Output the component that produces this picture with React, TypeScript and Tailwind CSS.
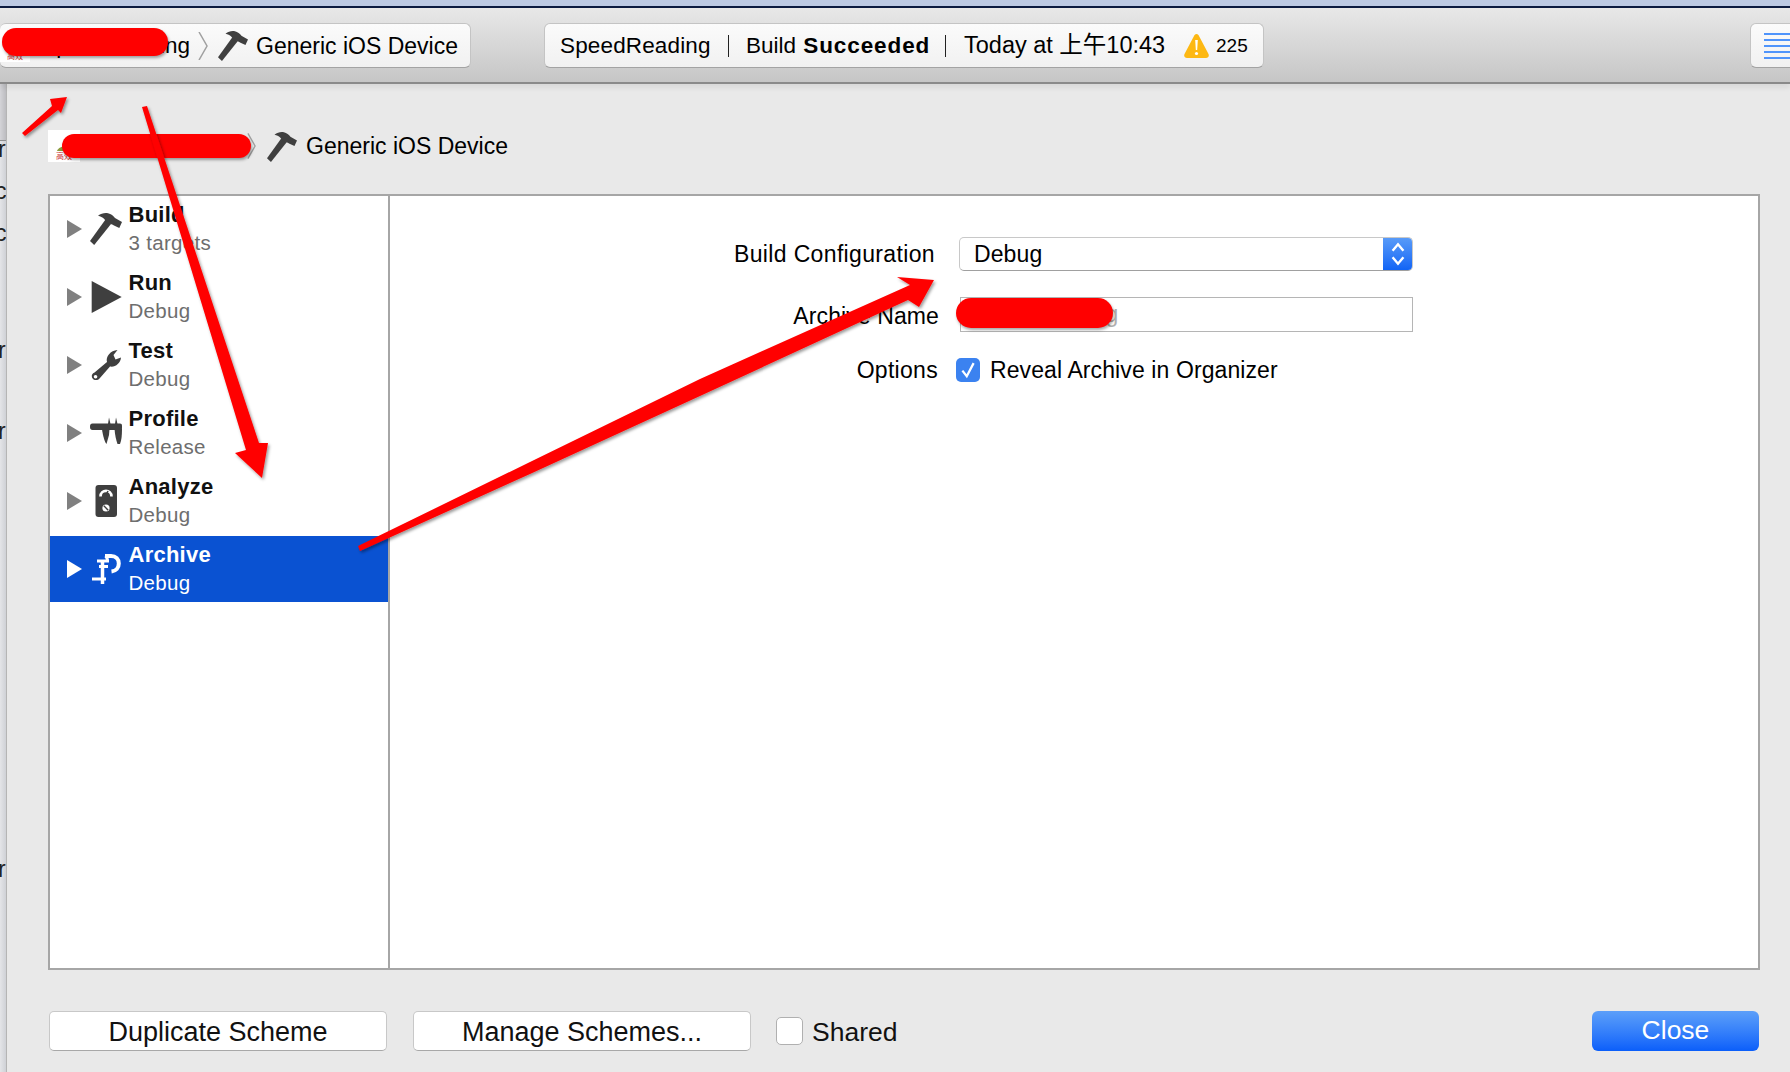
import type { ReactNode } from 'react';

const font = { fontFamily: '"Liberation Sans", "Noto Sans CJK SC", sans-serif' };

function HammerIcon({ className }: { className?: string }) {
  return (
    <svg viewBox="0 0 32 32" className={className} fill="currentColor">
      <path d="M0 28 L4.2 32 L21 11 L15.5 6.5 Z" />
      <path d="M8 2.8 C11 0.4 15 -0.4 18 0.3 C21 1 23.5 3 25 5 L32 9 L29.3 15 L24 12.5 C21.5 11 19.5 10.5 18 10.5 L14 5.8 C12.5 4.2 10.5 3.4 8 2.8 Z" />
    </svg>
  );
}

function PlayIcon({ className }: { className?: string }) {
  return (
    <svg viewBox="0 0 32 32" className={className} fill="currentColor">
      <path d="M1.7 0 L31.7 16 L1.7 32 Z" />
    </svg>
  );
}

function WrenchIcon({ className }: { className?: string }) {
  return (
    <svg viewBox="0 0 32 32" className={className} fill="currentColor">
      <path d="M17 13 C15.5 7.5 20.5 1.5 27.5 1 L23.5 6 L25.5 10.5 L31 8.5 C30.5 14.5 25 18.5 20 17.5 L9.5 29.5 C7.5 32 3 31.5 2 28.5 C1.2 26.2 2.4 24.4 4.5 23.5 Z M5.5 26 A1.8 1.8 0 1 0 5.6 29.6 A1.8 1.8 0 1 0 5.5 26 Z" fillRule="evenodd" />
    </svg>
  );
}

function CaliperIcon({ className }: { className?: string }) {
  return (
    <svg viewBox="0 0 32 32" className={className} fill="currentColor">
      <path d="M2.5 6.5 H30 C31.2 6.5 32 7.3 32 8.5 V11 C32 12.2 31.5 13 30.5 13 H2.5 C0.8 13 0 12 0 9.7 C0 7.5 0.8 6.5 2.5 6.5 Z" />
      <path d="M12 12 H19.5 L19 18 L16.5 27 C15 25.5 13 20 12 12 Z" />
      <path d="M24.5 12 H32 C32 18 31.5 23.5 30 27 L27.5 27 C26 23 25 18 24.5 12 Z" />
      <path d="M18 7 L19 0.5 L20.5 7 Z" />
      <path d="M25 7 L26 0.5 L27.5 7 Z" />
    </svg>
  );
}

function GaugeIcon({ className }: { className?: string }) {
  return (
    <svg viewBox="0 0 32 32" className={className}>
      <rect x="5.5" y="0" width="21.5" height="32" rx="3" fill="currentColor" />
      <path d="M10.5 11.5 C10.5 4 21.5 4 21.5 11.5" stroke="#fff" strokeWidth="2.6" fill="none" />
      <path d="M16 10 L18 6" stroke="currentColor" strokeWidth="1.5" />
      <circle cx="16" cy="23" r="3.6" fill="#fff" />
      <path d="M13.8 20.8 L18.2 25.2" stroke="currentColor" strokeWidth="1.4" />
    </svg>
  );
}

function ClampIcon({ className }: { className?: string }) {
  return (
    <svg viewBox="0 0 32 32" className={className} fill="none" stroke="currentColor">
      <path d="M15 3 H21 C26 3 28.8 6.5 28.8 10.5 C28.8 15 26 18 21.5 18.5" strokeWidth="4" />
      <path d="M15.5 3 C17 4.5 17.5 6 17.5 8" strokeWidth="3" />
      <path d="M7 8 H19" strokeWidth="3" />
      <path d="M9 13.5 H18" strokeWidth="3" />
      <path d="M12.5 8 V31" strokeWidth="3.5" />
      <path d="M2 26 H16" strokeWidth="3" />
    </svg>
  );
}

function Triangle({ selected }: { selected?: boolean }) {
  return (
    <svg viewBox="0 0 15 18" className={`h-[18px] w-[15px] shrink-0 ${selected ? 'text-white' : 'text-[#808080]'}`} fill="currentColor">
      <path d="M0 0 L15 9 L0 18 Z" />
    </svg>
  );
}

function Chevron({ className }: { className?: string }) {
  return (
    <svg viewBox="0 0 10 28" className={className} fill="none" stroke="#a0a0a0" strokeWidth="1.5">
      <path d="M1 0 L9 14 L1 28" />
    </svg>
  );
}

function AppLogo({ className }: { className: string }) {
  return (
    <div className={`flex flex-col items-center justify-end bg-white text-[8px] leading-[11px] text-[#c33] ${className}`}>
      <svg viewBox="0 0 16 6" className="h-[6px] w-[16px]">
        <path d="M1 6 C3 1 11 0 15 3 L15 6 Z" fill="#8a9a3c" />
      </svg>
      <span>高效</span>
    </div>
  );
}

const schemeRows = [
  { title: 'Build', sub: '3 targets', icon: HammerIcon },
  { title: 'Run', sub: 'Debug', icon: PlayIcon },
  { title: 'Test', sub: 'Debug', icon: WrenchIcon },
  { title: 'Profile', sub: 'Release', icon: CaliperIcon },
  { title: 'Analyze', sub: 'Debug', icon: GaugeIcon },
  { title: 'Archive', sub: 'Debug', icon: ClampIcon, selected: true },
];

const edgeLetters = [
  { ch: 'r', cls: '-mt-[2px] -ml-[2px]' },
  { ch: 'c', cls: 'mt-[22px] -ml-[5px]' },
  { ch: 'c', cls: 'mt-[22px] -ml-[5px]' },
  { ch: 'r', cls: 'mt-[97px] -ml-[2px]' },
  { ch: 'r', cls: 'mt-[61px] -ml-[2px]' },
  { ch: 'r', cls: 'mt-[418px] -ml-[2px]' },
];

function Pill({ className, children }: { className: string; children: ReactNode }) {
  return (
    <div className={`flex h-[45px] shrink-0 items-center rounded-[6px] border border-[#c4c4c4] border-b-[#a3a3a3] bg-gradient-to-b from-[#fbfbfb] to-[#f1f1f1] text-[22.5px] text-black ${className}`}>
      {children}
    </div>
  );
}

function FooterButton({ children, className }: { children: ReactNode; className: string }) {
  return (
    <button className={`h-[40px] w-[338px] shrink-0 rounded-[5px] border border-[#c8c8c8] border-b-[#a8a8a8] bg-white text-[27px] text-[#111] ${className}`}>
      {children}
    </button>
  );
}

export default function App() {
  return (
    <div style={font} className="relative h-[1072px] w-[1790px] overflow-hidden bg-[#e9e9e9]">
      <div className="h-[6px] bg-[#bcc9e3]" />
      <div className="h-[2px] bg-[#0b1a40]" />

      {/* toolbar */}
      <div className="relative z-10 flex h-[76px] border-b-2 border-[#8a8a8a] bg-gradient-to-b from-[#e8e8e8] to-[#c6c6c6] pt-[15px] shadow-[0_4px_5px_rgba(0,0,0,0.07)]">
        <Pill className="w-[471px] justify-end border-l-0 pr-[12px]">
          <span className="mr-[8px] pt-[1px]">SpeedReading</span>
          <Chevron className="mr-[10px] h-[28px] w-[10px]" />
          <HammerIcon className="mr-[8px] h-[30px] w-[30px] text-[#3f3f3f]" />
          <span className="pt-[2px] text-[23px]">Generic iOS Device</span>
        </Pill>
        <Pill className="ml-[73px] w-[720px] pl-[15px] pt-[1px]">
          <span className="w-[168px] tracking-[0.15px]">SpeedReading</span>
          <span className="h-[22px] w-px bg-[#222]" />
          <span className="ml-[17px] w-[199px]">
            Build <b className="ml-[1px] tracking-[0.9px]">Succeeded</b>
          </span>
          <span className="h-[22px] w-px bg-[#222]" />
          <span className="ml-[18px] w-[220px] text-[23.5px]">Today at 上午10:43</span>
          <svg viewBox="0 0 25 24" className="h-[24px] w-[25px]">
            <path d="M12.5 0 C14 0 14.5 1 15 2 L24.5 20 C25.5 22.5 24 24 22 24 H3 C1 24 -0.5 22.5 0.5 20 L10 2 C10.5 1 11 0 12.5 0 Z" fill="#fdb813" />
            <path d="M11.2 6 H13.8 L13.2 16 H11.8 Z" fill="#fff" />
            <circle cx="12.5" cy="19.5" r="1.6" fill="#fff" />
          </svg>
          <span className="ml-[7px] text-[19px]">225</span>
        </Pill>
        <Pill className="ml-[486px] w-[60px] flex-col justify-center gap-[4px] pl-[14px]">
          {[0, 1, 2, 3, 4].map(i => (
            <span key={i} className="h-[2px] w-[46px] bg-[#4f94fb]" />
          ))}
        </Pill>
      </div>

      <div className="flex h-[988px]">
        {/* window behind the sheet */}
        <div className="h-full w-[7px] shrink-0 overflow-hidden border-r border-[#b5b5b5] bg-gradient-to-r from-[#e4e5e8] to-[#cfd1d6] text-[23px] leading-[20px] text-[#222]">
          <div className="h-[57px] border-b border-[#8f8f8f] bg-gradient-to-r from-[#d4d4d8] to-[#bcbcc0]" />
          {edgeLetters.map((l, i) => (
            <div key={i} className={l.cls}>
              {l.ch}
            </div>
          ))}
        </div>

        <div className="min-w-0 flex-1 pl-[41px] pr-[30px]">
          <div className="flex h-[110px] items-start pt-[46px] text-black">
            <AppLogo className="h-[32px] w-[32px] shrink-0" />
            <div className="w-[167px]" />
            <Chevron className="mt-[2px] h-[28px] w-[9px]" />
            <HammerIcon className="ml-[11px] mt-[2px] h-[30px] w-[30px] text-[#3f3f3f]" />
            <span className="ml-[9px] mt-[2px] text-[23px] leading-[28px]">Generic iOS Device</span>
          </div>

          <div className="flex h-[776px] border-2 border-[#a6a6a6] bg-white">
            <div className="w-[340px] shrink-0 border-r-2 border-[#a6a6a6]">
              {schemeRows.map(row => {
                const Icon = row.icon;
                return (
                  <div
                    key={row.title}
                    className={`flex items-center pl-[17px] ${row.selected ? 'h-[66px] bg-[#0a52d2] pb-[1px]' : 'h-[68px] pb-[3px]'}`}
                  >
                    <Triangle selected={row.selected} />
                    <Icon className={`ml-[8px] h-[32px] w-[32px] shrink-0 ${row.selected ? 'text-white' : 'text-[#3f3f3f]'}`} />
                    <div className="ml-[6.5px] flex flex-col">
                      <span className={`text-[22px] font-bold leading-[28px] tracking-[0.25px] ${row.selected ? 'text-white' : 'text-[#111]'}`}>
                        {row.title}
                      </span>
                      <span className={`text-[20.5px] leading-[28px] tracking-[0.3px] ${row.selected ? 'text-white' : 'text-[#6e6e6e]'}`}>
                        {row.sub}
                      </span>
                    </div>
                  </div>
                );
              })}
            </div>

            <div className="flex flex-1 flex-col gap-[26px] pt-[41px] text-[23px] tracking-[0.1px] text-black">
              <div className="flex h-[34px] items-center">
                <span className="w-[545px] text-right tracking-[0.35px]">Build Configuration</span>
                <div className="ml-[24px] flex h-[34px] w-[454px] items-center justify-between overflow-hidden rounded-[5px] border border-[#c8c8c8] border-b-[#a0a0a0] bg-white pl-[14px]">
                  <span>Debug</span>
                  <div className="flex h-[34px] w-[29px] items-center justify-center bg-gradient-to-b from-[#5a9cf8] to-[#0d62f5]">
                    <svg viewBox="0 0 14 24" className="h-[26px] w-[16px]" fill="none" stroke="#fff" strokeWidth="2.2">
                      <path d="M2 9 L7 3 L12 9" />
                      <path d="M2 15 L7 21 L12 15" />
                    </svg>
                  </div>
                </div>
              </div>
              <div className="flex h-[35px] items-center">
                <span className="w-[549px] pt-[3px] text-right">Archive Name</span>
                <div className="ml-[21px] flex h-[35px] w-[453px] items-center border border-[#b5b5b5] bg-white pl-[4px] text-[#b0b0b0]">
                  SpeedReading
                </div>
              </div>
              <div className="flex h-[24px] items-center">
                <span className="w-[548px] text-right tracking-[0.3px]">Options</span>
                <div className="ml-[18px] flex h-[24px] w-[24px] items-center justify-center rounded-[5px] bg-[#3b82f0]">
                  <svg viewBox="0 0 16 16" className="h-[20px] w-[20px]" fill="none" stroke="#fff" strokeWidth="1.8">
                    <path d="M3.5 8.5 L7 13 L12.5 2.5" />
                  </svg>
                </div>
                <span className="ml-[10px]">Reveal Archive in Organizer</span>
              </div>
            </div>
          </div>

          <div className="flex pt-[41px]">
            <FooterButton className="ml-[1px]">Duplicate Scheme</FooterButton>
            <FooterButton className="ml-[26px]">Manage Schemes...</FooterButton>
            <span className="ml-[25px] mt-[6px] h-[28px] w-[27px] shrink-0 rounded-[5px] border border-[#b0b0b0] bg-white" />
            <span className="ml-[9px] mt-[5px] text-[26.5px] leading-[32px] text-[#111]">Shared</span>
            <button className="ml-auto mr-[1px] h-[40px] w-[167px] rounded-[6px] bg-gradient-to-b from-[#5c9ff9] to-[#0a5efa] text-[26.5px] text-white">
              Close
            </button>
          </div>
        </div>
      </div>

      {/* markup drawn over the screenshot: redactions and arrows */}
      <AppLogo className="absolute left-0 top-[30px] z-10 h-[32px] w-[30px]" />
      <div className="absolute left-[2px] top-[28px] z-20 h-[28px] w-[166px] rounded-[14px] bg-[#ff0000] shadow-[1px_2px_3px_rgba(0,0,0,0.35)]" />
      <div className="absolute left-[62px] top-[134px] z-20 h-[24px] w-[189px] rounded-[12px] bg-[#ff0000] shadow-[1px_2px_3px_rgba(0,0,0,0.35)]" />
      <div className="absolute left-[956px] top-[298px] z-20 h-[30px] w-[157px] rounded-[15px] bg-[#ff0000] shadow-[1px_2px_3px_rgba(0,0,0,0.35)]" />
      <svg viewBox="0 0 1790 1072" className="pointer-events-none absolute left-0 top-0 z-20 h-[1072px] w-[1790px]">
        <defs>
          <filter id="arrowShadow" x="-10%" y="-10%" width="120%" height="120%">
            <feDropShadow dx="1.5" dy="2" stdDeviation="1.5" floodColor="#000" floodOpacity="0.4" />
          </filter>
        </defs>
        <g fill="#ff0000" filter="url(#arrowShadow)">
          <polygon points="22,133 52,106 50,99 67,97 61,113 58,110 25,136" />
          <polygon points="142,107 147,106 259,443 268,443 262,478 235,453 246,450" />
          <polygon points="358,546 530,462 700,379 910,285 897,277 934,280 919,307 908,300 700,396 530,474 360,551" />
        </g>
      </svg>
    </div>
  );
}
